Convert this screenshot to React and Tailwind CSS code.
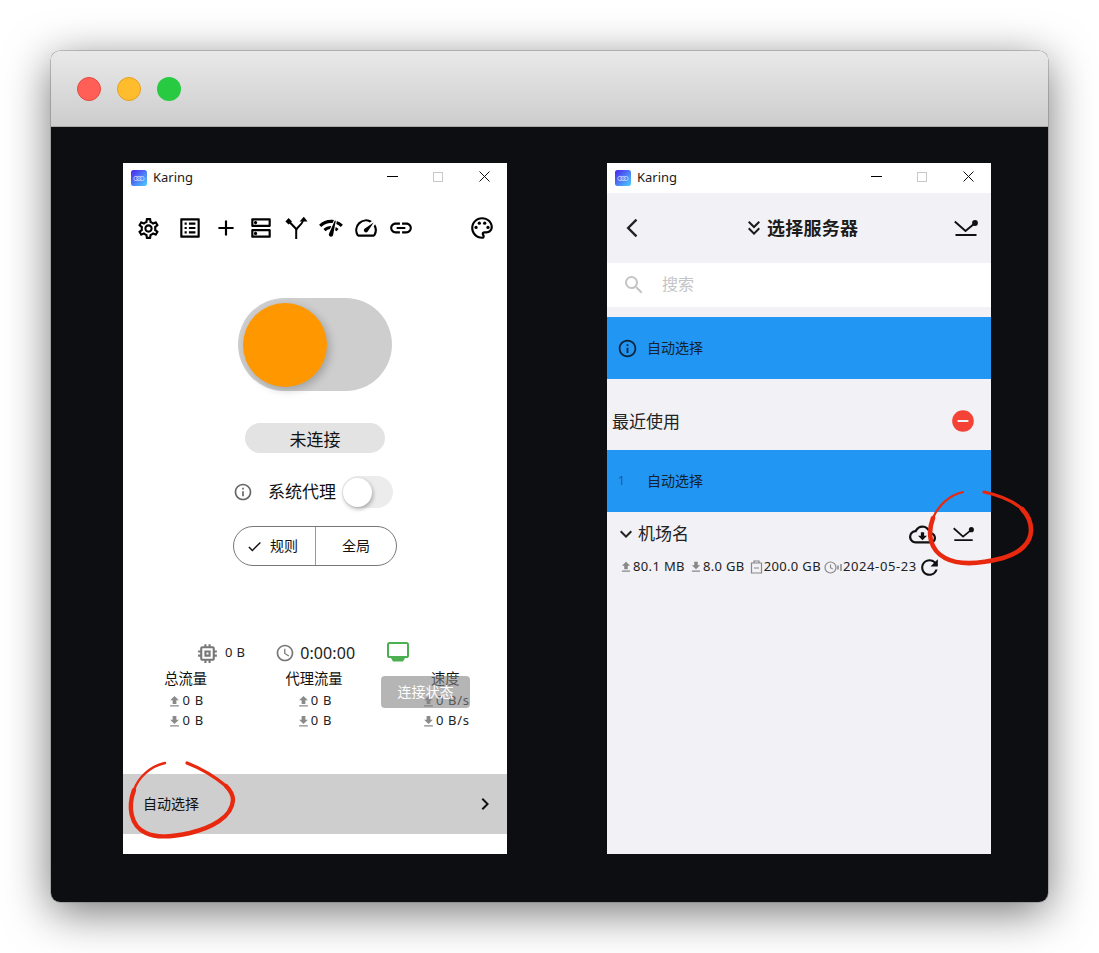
import React from "react";
import {
  MdOutlineSettings, MdOutlineListAlt, MdAdd, MdOutlineDns, MdNetworkCheck, MdOutlineSpeed, MdLink, MdOutlinePalette,
  MdInfoOutline, MdCheck, MdOutlineMemory, MdOutlineAccessTime, MdFileUpload, MdFileDownload,
  MdChevronRight, MdArrowBackIosNew, MdKeyboardDoubleArrowDown, MdSearch, MdRemoveCircle, MdExpandMore, MdOutlineCloudDownload, MdRefresh,
} from "react-icons/md";

const font = "font-['Noto_Sans','Noto_Sans_CJK_SC',sans-serif]";

function Logo() {
  return (
    <svg width="16" height="16" viewBox="0 0 16 16" className="shrink-0 -mt-[1px]">
      <defs>
        <linearGradient id="lg" x1="0" y1="0" x2="1" y2="1">
          <stop offset="0" stopColor="#4b22f0" />
          <stop offset="1" stopColor="#4cd0fb" />
        </linearGradient>
      </defs>
      <rect width="16" height="16" rx="2.5" fill="url(#lg)" />
      <circle cx="5" cy="8.5" r="2.2" fill="none" stroke="#cfd8ff" strokeWidth="0.8" />
      <circle cx="8" cy="8.5" r="2.2" fill="none" stroke="#cfd8ff" strokeWidth="0.8" />
      <circle cx="11" cy="8.5" r="2.2" fill="none" stroke="#cfd8ff" strokeWidth="0.8" />
    </svg>
  );
}

function TitleBar() {
  return (
    <div className="h-[30px] shrink-0 bg-white flex items-center pl-2 relative">
      <Logo />
      <span className="ml-[6px] -mt-[2px] text-[13px] text-[#1a1a1a] leading-none">Karing</span>
      <div className="ml-auto flex items-center pr-[17px] -mt-[3px]">
        <span className="w-[11px] h-[1px] bg-black" />
        <span className="ml-[35px] w-[10px] h-[10px] border border-[#c8c8c8]" />
        <svg className="ml-[36px]" width="11" height="11" viewBox="0 0 11 11">
          <path d="M.5.5l10 10M10.5.5l-10 10" stroke="#111" strokeWidth="1" fill="none" />
        </svg>
      </div>
    </div>
  );
}

function StopsIcon({ w = 24, color = "#111" }) {
  return (
    <svg width={w} height={(w * 16) / 24} viewBox="0 0 24 16">
      <path d="M0.8 1.4 L11.5 11 L20.5 3.5" fill="none" stroke={color} strokeWidth="2" />
      <circle cx="21" cy="3" r="2.9" fill={color} />
      <rect x="1.5" y="14" width="21" height="2" fill={color} />
    </svg>
  );
}

function SplitIcon() {
  return (
    <svg width="24" height="24" viewBox="0 0 24 24" className="shrink-0">
      <path d="M12.2 23 V13 L5.5 6" fill="none" stroke="#000" strokeWidth="2" />
      <path d="M12.2 14 C13 11 17 10 19 5" fill="none" stroke="#000" strokeWidth="2" />
      <path d="M19.8 0.8 L23.6 5.6 L15.6 5.6 Z" fill="#000" />
      <path d="M4.6 2 L8 5.4 L4.6 8.6 L1.4 5.4 Z" fill="#000" />
    </svg>
  );
}

function MonitorIcon() {
  return (
    <svg width="22" height="20" viewBox="0 0 22 20" className="shrink-0">
      <rect x="1" y="1" width="20" height="14" rx="1.6" fill="none" stroke="#4caf50" strokeWidth="2" />
      <path d="M4 16 H18 L16 19.5 H6 Z" fill="#4caf50" />
    </svg>
  );
}

function Traffic({ up, text }) {
  const Icon = up ? MdFileUpload : MdFileDownload;
  return (
    <div className="flex items-center justify-center h-5">
      <Icon size={15} className="text-[#8a8a8a]" />
      <span className="text-[13px] text-[#222] tracking-[0.7px]">{text}</span>
    </div>
  );
}

function StatCol({ title, unit, shift }) {
  return (
    <div className={`w-[130px] flex flex-col items-center ${shift}`}>
      <div className="text-[14.3px] leading-5 text-[#111]">{title}</div>
      <div className="mt-[2px]"><Traffic up text={unit} /></div>
      <Traffic text={unit} />
    </div>
  );
}

function LeftPhone() {
  return (
    <div className="w-[384px] h-[691px] bg-white flex flex-col relative">
      <TitleBar />
      <div className="h-[70px] shrink-0 flex items-center pl-[13px] pr-[12px] text-black">
        <MdOutlineSettings size={25} />
        <MdOutlineListAlt size={26} className="ml-[16px]" />
        <MdAdd size={26} className="ml-[10px]" />
        <MdOutlineDns size={26} className="ml-[9px]" />
        <span className="ml-[10px]"><SplitIcon /></span>
        <MdNetworkCheck size={26} className="ml-[10px]" />
        <MdOutlineSpeed size={26} className="ml-[9px]" />
        <MdLink size={26} className="ml-[9px]" />
        <MdOutlinePalette size={26} className="ml-auto" />
      </div>
      <div className="mt-[35px] self-center w-[154px] h-[93px] rounded-full bg-[#cecece] flex items-center pl-[5px]">
        <div className="w-[84px] h-[84px] rounded-full bg-[#ff9800] shadow-[3px_3px_8px_rgba(0,0,0,0.22)]" />
      </div>
      <div className="mt-[32px] self-center w-[140px] h-[30px] rounded-full bg-[#e3e3e3] flex items-center justify-center text-[17px] text-[#111]">
        <span className="mt-[3px]">未连接</span>
      </div>
      <div className="mt-[23px] flex items-center h-[32px]">
        <MdInfoOutline size={20} className="ml-[110px] text-[#666]" />
        <span className="ml-[15px] text-[17px] text-[#111]">系统代理</span>
        <div className="ml-[6px] w-[51px] h-[32px] rounded-full bg-[#ececec] flex items-center pl-[1px]">
          <div className="w-[29px] h-[29px] rounded-full bg-white shadow-[1px_2px_4px_rgba(0,0,0,0.3)]" />
        </div>
      </div>
      <div className="mt-[18px] self-center w-[164px] h-[40px] rounded-full border border-[#777] flex text-sm text-[#111]">
        <div className="w-[82px] flex items-center border-r border-[#999] pl-[12px]">
          <MdCheck size={17} />
          <span className="ml-[7px]">规则</span>
        </div>
        <div className="flex-1 flex items-center justify-center">全局</div>
      </div>
      <div className="mt-[75px] flex items-center h-[24px] text-[#222]">
        <MdOutlineMemory size={25} className="ml-[72px] text-[#777]" />
        <span className="ml-[5px] text-[13px] tracking-[0.3px]">0 B</span>
        <MdOutlineAccessTime size={20} className="ml-[30px] text-[#777]" />
        <span className="ml-[5px] text-base tracking-[0.1px]">0:00:00</span>
        <span className="ml-[32px] -mt-[2px]"><MonitorIcon /></span>
      </div>
      <div className="mt-[4px] flex">
        <StatCol title="总流量" unit="0 B" shift="-ml-[1px]" />
        <StatCol title="代理流量" unit="0 B" shift="ml-[1px]" />
        <StatCol title="速度" unit="0 B/s" shift="ml-[2px] translate-x-[2px]" />
      </div>
      <div className="absolute left-[258px] top-[513px] w-[89px] h-[32px] rounded bg-[rgba(128,128,128,0.58)] flex items-center justify-center text-sm text-white">连接状态</div>
      <div className="mt-[43px] h-[60px] bg-[#cecece] flex items-center pl-[20px] pr-[10px]">
        <span className="text-[14px] text-[#111] -mt-[2px]">自动选择</span>
        <MdChevronRight size={24} className="ml-auto text-[#111]" />
      </div>
    </div>
  );
}

function BlueRow({ lead, mt }) {
  return (
    <div className={`h-[62px] bg-[#2196f3] flex items-center ${mt}`}>
      <div className="w-[40px] pl-[10px] flex items-center">{lead}</div>
      <span className="text-[14px] text-[#14222e] -mt-[2px]">自动选择</span>
    </div>
  );
}

function MetaIconStorage() {
  return (
    <svg width="13" height="14" viewBox="0 0 13 14">
      <path d="M1.5 3h10v10h-10zM4 3V1h5v2M4 8h5" fill="none" stroke="#888" strokeWidth="1.2" />
    </svg>
  );
}

function MetaIconClock() {
  return (
    <svg width="19" height="13" viewBox="0 0 19 13">
      <circle cx="6.5" cy="6.5" r="5.5" fill="none" stroke="#888" strokeWidth="1.2" />
      <path d="M6.5 3.5v3.2l2.2 1.2" fill="none" stroke="#888" strokeWidth="1.1" />
      <path d="M14 4.5v4M17 3v7" stroke="#888" strokeWidth="1.5" fill="none" />
    </svg>
  );
}

function RightPhone() {
  return (
    <div className="w-[384px] h-[691px] bg-[#f1f1f6] flex flex-col">
      <TitleBar />
      <div className="h-[70px] shrink-0 flex items-center relative pl-[14px] pr-[13px]">
        <MdArrowBackIosNew size={22} className="text-[#222]" />
        <div className="absolute left-[135px] flex items-center text-[#1c1c1c]">
          <MdKeyboardDoubleArrowDown size={24} />
          <span className="ml-[1px] text-[18px] font-bold tracking-[0.25px]">选择服务器</span>
        </div>
        <div className="ml-auto"><StopsIcon /></div>
      </div>
      <div className="h-[44px] bg-white flex items-center pl-[15px]">
        <MdSearch size={24} className="text-[#c4c4c4]" />
        <span className="ml-[16px] -mt-[2px] text-base text-[#c4c4c4]">搜索</span>
      </div>
      <BlueRow mt="mt-[10px]" lead={<MdInfoOutline size={21} className="text-[#0e2336]" />} />
      <div className="h-[71px] flex items-center pl-[5px] pr-[15px] pt-[14px]">
        <span className="text-[17px] text-[#222]">最近使用</span>
        <MdRemoveCircle size={26} className="ml-auto -mt-[2px] text-[#f44336]" />
      </div>
      <BlueRow lead={<span className="text-[12px] text-[#1c5c90] pl-[1px]">1</span>} />
      <div className="h-[44px] flex items-center pl-[7px] pr-[17px]">
        <MdExpandMore size={24} className="text-[#222]" />
        <span className="text-[17px] text-[#222]">机场名</span>
        <MdOutlineCloudDownload size={27} className="ml-auto text-[#111]" />
        <div className="ml-[17px]"><StopsIcon w={21} /></div>
      </div>
      <div className="flex items-center h-[22px] pl-[12px] text-[13px] text-[#222] whitespace-nowrap">
        <MdFileUpload size={14} className="text-[#888]" />
        <span className="tracking-[0.35px]">80.1 MB</span>
        <MdFileDownload size={14} className="ml-[4px] text-[#888]" />
        <span className="tracking-[0.35px]">8.0 GB</span>
        <span className="ml-[5px]"><MetaIconStorage /></span>
        <span className="ml-[1px] tracking-[0.35px]">200.0 GB</span>
        <span className="ml-[3px]"><MetaIconClock /></span>
        <span className="tracking-[0.6px]">2024-05-23</span>
        <MdRefresh size={25} className="text-[#111]" />
      </div>
    </div>
  );
}

function Scribble() {
  return (
    <svg className="absolute inset-0 pointer-events-none" width="1099" height="953" viewBox="0 0 1099 953">
      <g fill="none" stroke="#e8290f" strokeLinecap="round" strokeLinejoin="round">
        <path strokeWidth="2.4" d="M165 763 C150 766 138 778 134 790" />
        <path strokeWidth="4.4" d="M134 790 C128 806 130 826 146 833 C156 838 172 837 190 833 C210 828 232 818 233 800 C233 794 230 790 226 786" />
        <path strokeWidth="3.2" d="M226 786 C214 776 200 768 187 763" />
        <path strokeWidth="2.2" d="M963 492 C949 495 938 506 933 518" />
        <path strokeWidth="4.6" d="M933 518 C927 534 930 550 945 558 C958 565 980 564 1003 558 C1020 553 1031 543 1031 530 C1031 522 1028 515 1022 509" />
        <path strokeWidth="3.2" d="M1022 509 C1012 500 998 495 984 492" />
      </g>
    </svg>
  );
}

export default function App() {
  return (
    <div className={`w-[1099px] h-[953px] bg-white overflow-hidden relative pt-[51px] pl-[51px] ${font}`}>
      <div className="w-[997px] h-[851px] rounded-[9px] overflow-hidden flex flex-col shadow-[0_0_0_0.5px_rgba(110,110,110,0.7),0_10px_45px_rgba(0,0,0,0.55)]">
        <div className="h-[76px] shrink-0 bg-gradient-to-b from-[#e9e9e9] to-[#cdcdcd] border-b border-[#aaaaaa] flex items-center pl-[26px] gap-[16px]">
          <span className="w-6 h-6 rounded-full bg-[#ff5f57] border border-[#e5493f]" />
          <span className="w-6 h-6 rounded-full bg-[#ffbd2e] border border-[#e5a024]" />
          <span className="w-6 h-6 rounded-full bg-[#28ca41]" />
        </div>
        <div className="flex-1 bg-[#0d0e12] pl-[72px] pt-[36px] flex gap-[100px]">
          <LeftPhone />
          <RightPhone />
        </div>
      </div>
      <Scribble />
    </div>
  );
}
